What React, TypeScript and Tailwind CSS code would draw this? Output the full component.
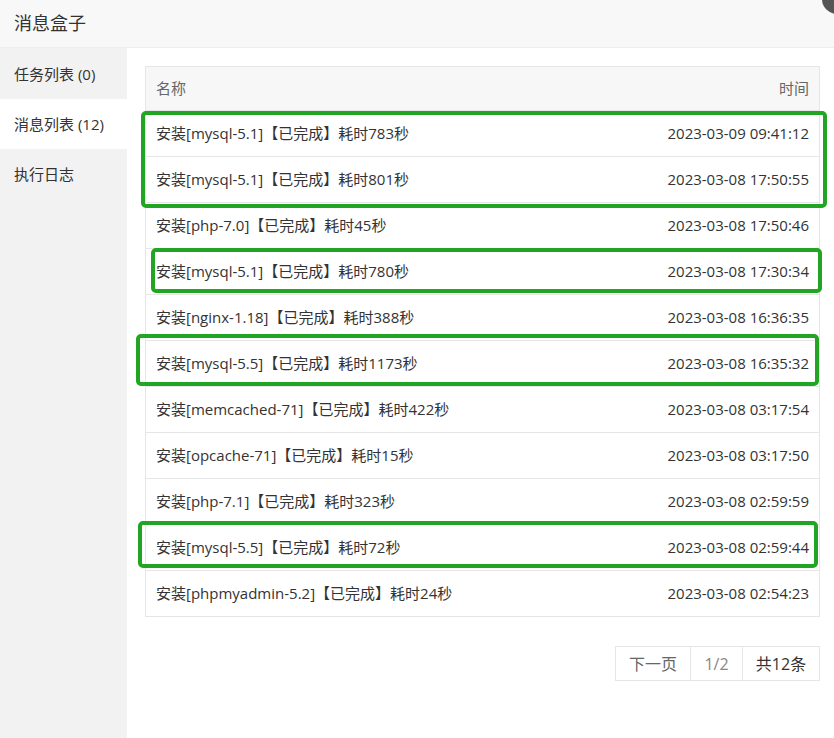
import React from 'react'

type Msg = { name: string; time: string }

const rows: Msg[] = [
  { name: '安装[mysql-5.1]【已完成】耗时783秒', time: '2023-03-09 09:41:12' },
  { name: '安装[mysql-5.1]【已完成】耗时801秒', time: '2023-03-08 17:50:55' },
  { name: '安装[php-7.0]【已完成】耗时45秒', time: '2023-03-08 17:50:46' },
  { name: '安装[mysql-5.1]【已完成】耗时780秒', time: '2023-03-08 17:30:34' },
  { name: '安装[nginx-1.18]【已完成】耗时388秒', time: '2023-03-08 16:36:35' },
  { name: '安装[mysql-5.5]【已完成】耗时1173秒', time: '2023-03-08 16:35:32' },
  { name: '安装[memcached-71]【已完成】耗时422秒', time: '2023-03-08 03:17:54' },
  { name: '安装[opcache-71]【已完成】耗时15秒', time: '2023-03-08 03:17:50' },
  { name: '安装[php-7.1]【已完成】耗时323秒', time: '2023-03-08 02:59:59' },
  { name: '安装[mysql-5.5]【已完成】耗时72秒', time: '2023-03-08 02:59:44' },
  { name: '安装[phpmyadmin-5.2]【已完成】耗时24秒', time: '2023-03-08 02:54:23' },
]

const tabs = [
  { label: '任务列表 (0)', active: false },
  { label: '消息列表 (12)', active: true },
  { label: '执行日志', active: false },
]

export default function App() {
  return (
    <div
      className="relative w-[834px] h-[738px] overflow-hidden bg-white text-[#333]"
      style={{ fontFamily: '"Open Sans", "Noto Sans CJK SC", sans-serif' }}
    >
      {/* title bar */}
      <div className="h-[48px] flex items-center pl-[14px] bg-[#f8f8f8] border-b border-[#eee] text-[18px] text-[#333]">
        消息盒子
      </div>
      {/* close button peeking in the corner */}
      <div className="absolute left-[822px] top-[-16px] w-[30px] h-[30px] rounded-full bg-[#555]" />

      <div className="flex h-[690px]">
        {/* left tabs */}
        <div className="w-[127px] shrink-0 bg-[#f2f2f2] pt-[1px]">
          {tabs.map((t) => (
            <div
              key={t.label}
              className={`h-[50px] flex items-center pl-[14px] text-[15px] text-[#333] ${t.active ? 'bg-white' : ''}`}
            >
              {t.label}
            </div>
          ))}
        </div>

        {/* messages */}
        <div className="flex-1 pl-[18px] pr-[14px] pt-[18px]">
          <div className="border border-[#e6e6e6] text-[15px]">
            <div className="h-[43px] flex items-center justify-between px-[10px] bg-[#f7f7f7] text-[#666]">
              <span>名称</span>
              <span>时间</span>
            </div>
            {rows.map((r, i) => (
              <div
                key={i}
                className="h-[46px] flex items-center justify-between px-[10px] border-t border-[#e6e6e6]"
              >
                <span>{r.name}</span>
                <span>{r.time}</span>
              </div>
            ))}
          </div>

          <div className="flex justify-end mt-[29px]">
            <div className="flex h-[35px] border border-[#e6e6e6] text-[16px]">
              <div className="w-[75px] flex items-center justify-center text-[#666] border-r border-[#e6e6e6]">下一页</div>
              <div className="w-[52px] flex items-center justify-center text-[#888] border-r border-[#e6e6e6]">1/2</div>
              <div className="w-[76px] flex items-center justify-center text-[#333]">共12条</div>
            </div>
          </div>
        </div>
      </div>

      {/* green annotation boxes */}
      <div className="absolute left-[141px] top-[111px] w-[686px] h-[97px] border-[4px] border-[#22a522] rounded-[5px]" />
      <div className="absolute left-[151px] top-[248px] w-[671px] h-[45px] border-[4px] border-[#22a522] rounded-[5px]" />
      <div className="absolute left-[136px] top-[334px] w-[683px] h-[52px] border-[4px] border-[#22a522] rounded-[5px]" />
      <div className="absolute left-[138px] top-[521px] w-[680px] h-[47px] border-[4px] border-[#22a522] rounded-[5px]" />
    </div>
  )
}
